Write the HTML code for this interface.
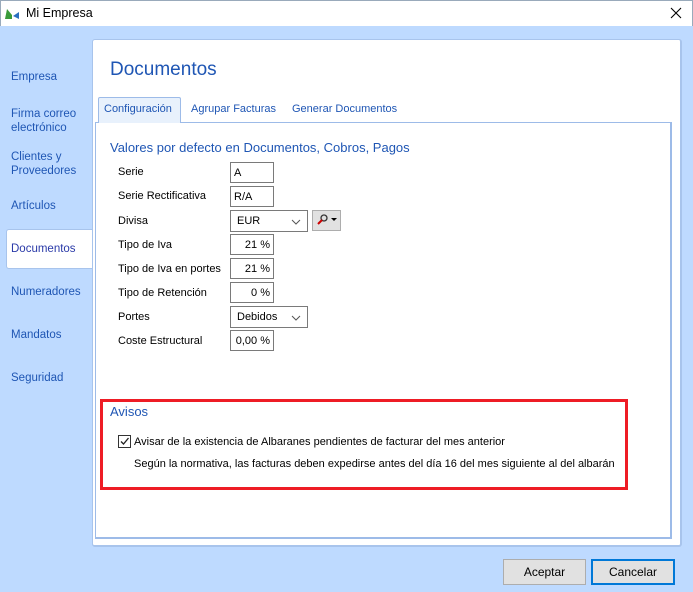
<!DOCTYPE html>
<html><head><meta charset="utf-8"><style>
*{box-sizing:border-box;margin:0;padding:0}
body{width:693px;height:592px;position:relative;overflow:hidden;background:#bedaff;font-family:"Liberation Sans",sans-serif;font-size:12px;color:#000}
.abs{position:absolute}
#title{left:0;top:0;width:693px;height:26px;background:#fff;border:1px solid #9ab;border-bottom:none}
.side{position:absolute;left:11px;color:#1f56b4;font-size:11.5px;line-height:14px}
.lbl{position:absolute;left:118px;font-size:11px}
.inp{position:absolute;left:230px;width:44px;height:21px;border:1px solid #7a7a7a;background:#fff;font-size:11px;padding:3px 3px;line-height:14px}
.r{text-align:right}
.combo{position:absolute;left:230px;width:78px;height:22px;border:1px solid #7a7a7a;background:#fff;font-size:11px;padding:4px 6px}
.combo svg{position:absolute;right:6px;top:8px}
.btn{position:absolute;top:559px;height:26px;background:#e1e1e1;border:1px solid #adadad;text-align:center;line-height:24px;font-size:12px}
</style></head><body>
<div id="title" class="abs"></div>
<svg class="abs" style="left:4px;top:6px" width="16" height="14"><path d="M1 13 L3 3 L8 9 L8 13Z" fill="#3a9b3a"/><path d="M15 6 L9 10 L15 13Z" fill="#2a6fc0"/></svg>
<div class="abs" style="left:26px;top:6px;font-size:12.5px">Mi Empresa</div>
<svg class="abs" style="left:670px;top:7px" width="12" height="12"><path d="M1 1L11 11M11 1L1 11" stroke="#000" stroke-width="1.1"/></svg>

<div class="side" style="top:70px">Empresa</div>
<div class="side" style="top:107px">Firma correo<br>electrónico</div>
<div class="side" style="top:150px">Clientes y<br>Proveedores</div>
<div class="side" style="top:199px">Artículos</div>
<div class="abs" style="left:6px;top:229px;width:88px;height:40px;background:#fff;border:1px solid #a8c4ec;border-right:none;border-radius:3px 0 0 3px"></div>
<div class="side" style="top:242px;color:#2a3aa8">Documentos</div>
<div class="side" style="top:285px">Numeradores</div>
<div class="side" style="top:328px">Mandatos</div>
<div class="side" style="top:371px">Seguridad</div>

<div class="abs" style="left:92px;top:39px;width:590px;height:508px;background:#fff;border:1px solid #a8c4ec;border-right:2px solid #a8c4ec;border-bottom:2px solid #a8c4ec;border-radius:3px"></div>
<div class="abs" style="left:110px;top:59px;font-size:19px;color:#1f56b4">Documentos</div>

<div class="abs" style="left:95px;top:122px;width:577px;height:417px;border:1px solid #9dbbe8;border-right:2px solid #9dbbe8;border-bottom:2px solid #9dbbe8"></div>
<div class="abs" style="left:98px;top:97px;width:83px;height:26px;background:#e8f1fc;border:1px solid #9dbbe8;border-bottom:none;border-radius:2px 2px 0 0"></div>
<div class="abs" style="left:104px;top:103px;font-size:11px;color:#1f56b4">Configuración</div>
<div class="abs" style="left:191px;top:103px;font-size:11px;color:#1f56b4">Agrupar Facturas</div>
<div class="abs" style="left:292px;top:103px;font-size:11px;color:#1f56b4">Generar Documentos</div>

<div class="abs" style="left:110px;top:140px;font-size:13px;color:#1f56b4">Valores por defecto en Documentos, Cobros, Pagos</div>

<div class="lbl" style="top:166px">Serie</div><div class="inp" style="top:162px">A</div>
<div class="lbl" style="top:190px">Serie Rectificativa</div><div class="inp" style="top:186px">R/A</div>
<div class="lbl" style="top:215px">Divisa</div>
<div class="combo" style="top:210px">EUR<svg width="10" height="6"><path d="M1 1L5 5L9 1" stroke="#555" fill="none"/></svg></div>
<div class="abs" style="left:312px;top:210px;width:29px;height:21px;background:#e1e1e1;border:1px solid #adadad"></div>
<svg class="abs" style="left:316px;top:213px" width="22" height="14"><circle cx="8" cy="5" r="3" fill="none" stroke="#333" stroke-width="1.3"/><path d="M6 7L2 11" stroke="#c00" stroke-width="2"/><path d="M15 5h6l-3 3z" fill="#000"/></svg>
<div class="lbl" style="top:239px">Tipo de Iva</div><div class="inp r" style="top:234px">21 %</div>
<div class="lbl" style="top:263px">Tipo de Iva en portes</div><div class="inp r" style="top:258px">21 %</div>
<div class="lbl" style="top:287px">Tipo de Retención</div><div class="inp r" style="top:282px">0 %</div>
<div class="lbl" style="top:311px">Portes</div>
<div class="combo" style="top:306px">Debidos<svg width="10" height="6"><path d="M1 1L5 5L9 1" stroke="#555" fill="none"/></svg></div>
<div class="lbl" style="top:335px">Coste Estructural</div><div class="inp r" style="top:330px">0,00 %</div>

<div class="abs" style="left:100px;top:399px;width:528px;height:91px;border:3px solid #ee1c25"></div>
<div class="abs" style="left:110px;top:404px;font-size:13px;color:#1f56b4">Avisos</div>
<div class="abs" style="left:118px;top:435px;width:13px;height:13px;border:1px solid #333;background:#fff"></div>
<svg class="abs" style="left:119px;top:436px" width="11" height="11"><path d="M2 5.5L4.5 8L9.5 2" stroke="#222" stroke-width="1.3" fill="none"/></svg>
<div class="abs" style="left:134px;top:436px;font-size:11px">Avisar de la existencia de Albaranes pendientes de facturar del mes anterior</div>
<div class="abs" style="left:134px;top:458px;font-size:11px">Según la normativa, las facturas deben expedirse antes del día 16 del mes siguiente al del albarán</div>

<div class="btn" style="left:503px;width:83px">Aceptar</div>
<div class="btn" style="left:591px;width:84px;border:2px solid #0078d7;line-height:22px">Cancelar</div>
</body></html>
